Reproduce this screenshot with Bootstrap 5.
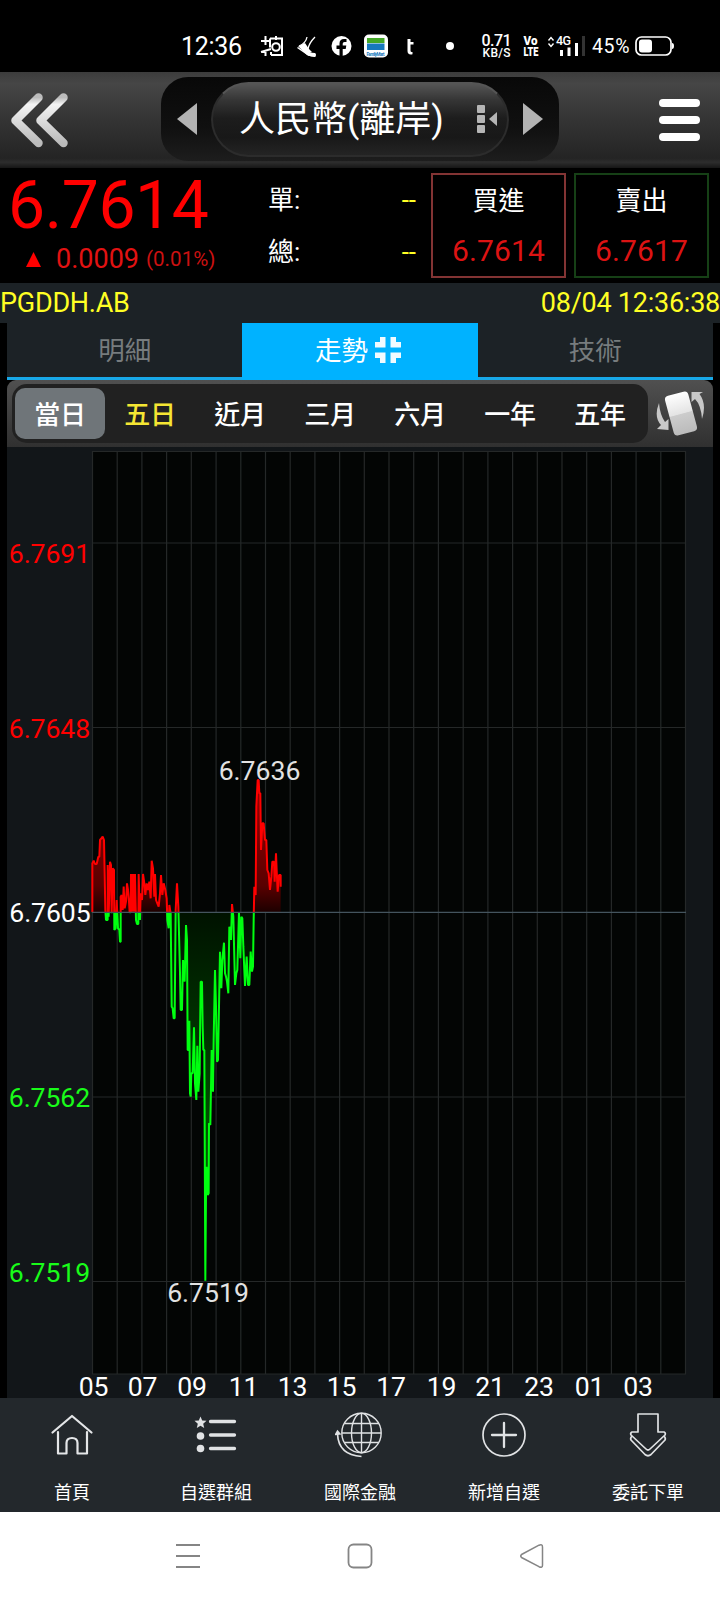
<!DOCTYPE html>
<html lang="zh-Hant">
<head>
<meta charset="utf-8">
<meta name="viewport" content="width=device-width, initial-scale=1">
<title>人民幣(離岸)</title>
<link href="https://cdn.jsdelivr.net/npm/bootstrap@5.3.0/dist/css/bootstrap.min.css" rel="stylesheet">
<style>
body{background:#000;color:#fff;font-family:Roboto,"Noto Sans CJK TC",sans-serif;width:720px;overflow-x:hidden}
svg{display:block;flex:none}
#plot{overflow:visible}
.statusbar{height:72px;padding-top:20px}
.titlebar{height:96px;background:linear-gradient(#3c3c3c 0,#464646 12%,#343434 50%,#242424 90%,#2d2d2d 94%,#161616 100%);padding:5px 19px 0 10px}
.pod{width:398px;height:84px;border-radius:27px;background:linear-gradient(#080808,#101010 60%,#1d1d1d);padding:0 16px;margin-right:9px}
.pill{width:298px;height:75px;border-radius:38px;background:linear-gradient(#555 0,#363636 22%,#1d1d1d 48%,#181818 75%,#242424 100%);border:2px solid #2c2c2c;border-top-color:#555;padding-left:26px;font-size:36px;line-height:72px}
.quote{height:115px;padding:5px 11px 0 8px}
.last{font-size:66px;line-height:66px;color:#f00;letter-spacing:-.4px}
.chg{font-size:27px;line-height:40px;color:#e21212}
.pct{font-size:20.6px;color:#c11;margin-left:7px}
.vol{width:148px;font-size:26px;line-height:52px;padding-top:1px}
.yl{color:#ffff24}
.side{width:135px;height:105px;border:2px solid #833434;font-size:26px;line-height:52px;text-align:center}
.side.sell{border-color:#164016;margin-left:8px}
.side .px{font-size:30px;line-height:48px;color:#dc1313;letter-spacing:.1px}
.codebar{height:40px;background:#1c2226;font-size:27px;line-height:40px}
.tabs{height:57px;margin:0 7px;background:#1c2226;font-size:26.5px;color:#777c7e}
.tabs>div{flex:1;border-bottom:3px solid #18a8e8;line-height:56px;height:57px}
.tabs>.on{background:#00b2ff;border-color:#00b2ff;color:#fff}
.range{height:67px;margin:0 7px;background:linear-gradient(#505050,#303030);border-radius:9px 9px 0 0;padding:4px 8px 0 5px}
.track{width:636px;height:59px;border-radius:15px;background:#212121;padding:4px 3px}
.track>div{width:90px;height:51px;line-height:54px;text-align:center;font-size:26px;font-weight:500;letter-spacing:-.2px}
.track>.on{background:#6f7579;border-radius:10px}
.chart{margin:0 7px;height:951px;background:#121619}
.botnav{height:114px;background:#23282c;font-size:18px}
.botnav>div{flex:1;padding-top:13px;line-height:24px}
.botnav svg{margin-bottom:20px}
.sysnav{height:88px;background:#fff}
</style>
</head>
<body>
<div class="statusbar">
<svg width="720" height="52" viewBox="0 20 720 52" fill="#fff" font-family="Roboto,sans-serif">
 <text x="181" y="55" font-size="25" textLength="61">12:36</text>
 <g stroke="#fff" stroke-width="2" fill="none"><path d="M261 41h10M265.500 36v9M265.500 50v6M261 52l10-3M270 38.500h12v16.500h-11M270 38.500v9M271 52v3M276 36v4"/><circle cx="276" cy="47" r="3.800"/></g>
 <path d="M298 46q4 0 7 4 4 3 10 3 2 1.500 0 4-4 0-8-2z"/><path d="M297.500 47.500l11 7.500 7 1" stroke="#fff" stroke-width="1.500" fill="none"/><path d="M299 46q7-3 8-9M308 49q1-6 7-12" stroke="#fff" stroke-width="1.300" fill="none"/><path d="M299 46l6-3 4 6 3 3-5 2z"/>
 <circle cx="341.500" cy="46" r="10"/><path d="M339.500 56v-7h-3v-3.500h3v-2q0-4.500 4.500-4.500h2.500v3h-2q-1.800 0-1.800 1.800v1.700h3.600l-.6 3.500h-3v7z" fill="#000"/>
 <rect x="364" y="34.500" width="24" height="23" rx="5"/><path d="M367 38h17.500v5h-17.500z" fill="#43a727"/><path d="M367 43.500h17.500v6.500h-17.500z" fill="#1678bd"/><text x="366.500" y="55.500" font-size="4.500" font-weight="700" fill="#1678bd" textLength="18">FamilyMart</text>
 <path d="M407.500 39h3v3h3v2.500h-3v6q0 2 2 1.500v2.300q-5 1-5-3.300z"/>
 <circle cx="450" cy="46" r="4"/>
 <text x="481.500" y="46" font-size="16" font-weight="500" textLength="30">0.71</text><text x="482.500" y="57" font-size="12" font-weight="500" textLength="28">KB/S</text>
 <text x="523.500" y="45" font-size="12" font-weight="900" textLength="14" lengthAdjust="spacingAndGlyphs">Vo</text><text x="523.500" y="56" font-size="12.500" font-weight="900" textLength="15" lengthAdjust="spacingAndGlyphs">LTE</text>
 <path d="M548.500 40.500l2.500-3 2.500 3M548.500 43.500l2.500 3 2.500-3" fill="none" stroke="#fff" stroke-width="1.400"/>
 <text x="556" y="45" font-size="12.500" font-weight="500" textLength="15">4G</text>
 <path d="M560 50h3v6h-3zM567.500 47.500h3v8.500h-3zM575 43h3v13h-3z"/><path d="M582 36h3v20h-3z" fill="#333"/>
 <text x="592" y="52.500" font-size="19.500" textLength="37.500">45%</text>
 <rect x="636" y="37" width="35" height="18" rx="5.500" fill="none" stroke="#fff" stroke-width="1.700"/><rect x="639" y="39.500" width="13" height="13" rx="3"/><path d="M672 43q2 0 2 3t-2 3z"/>
</svg>
</div>

<nav class="titlebar d-flex align-items-start">
 <svg width="60" height="60" viewBox="10 92 60 60" style="margin-top:15px"><defs><linearGradient id="sil" x1="0" y1="0" x2="0" y2="1"><stop offset="0" stop-color="#bbb"/><stop offset=".15" stop-color="#f4f4f4"/><stop offset=".5" stop-color="#ddd"/><stop offset="1" stop-color="#bbb"/></linearGradient></defs><path d="M38.500 97.500L15.500 120.500 38.500 143M63.500 97.500L40.500 120.500 63.500 143" fill="none" stroke="url(#sil)" stroke-width="8.500" stroke-linecap="round" stroke-linejoin="round"/></svg>
 <div class="pod d-flex align-items-center justify-content-between" style="margin-left:91px">
  <svg width="20" height="32"><path d="M0 16L20 0v32z" fill="#b3b3b3"/></svg>
  <div class="pill d-flex text-nowrap align-items-start"><span>人民幣(離岸)</span>
   <svg width="22" height="30" class="ms-auto" style="margin:20px 8px 0 0" fill="#b5b5b5"><rect y="1" width="8" height="8" rx="1"/><rect y="11" width="8" height="8" rx="1"/><rect y="21" width="8" height="8" rx="1"/><path d="M12 15l8-7v14z"/></svg></div>
  <svg width="20" height="32"><path d="M20 16L0 0v32z" fill="#b3b3b3"/></svg>
 </div>
 <svg class="ms-auto" width="42" height="43" style="margin-top:21px" fill="#fff"><rect y="1" width="41" height="8" rx="4"/><rect y="18" width="41" height="8" rx="4"/><rect y="35" width="41" height="8" rx="4"/></svg>
</nav>

<section class="quote d-flex">
 <div style="width:260px"><div class="last">6.7614</div>
  <div class="chg d-flex align-items-center"><svg width="15" height="15" style="margin:0 15px 0 18px"><path d="M7.500 0L15 15H0z" fill="#f00"/></svg>0.0009<span class="pct">(0.01%)</span></div></div>
 <div class="vol"><div class="d-flex justify-content-between"><span>單:</span><span class="yl">--</span></div><div class="d-flex justify-content-between"><span>總:</span><span class="yl">--</span></div></div>
 <div class="side ms-auto"><div>買進</div><div class="px">6.7614</div></div>
 <div class="side sell"><div>賣出</div><div class="px">6.7617</div></div>
</section>

<div class="codebar yl d-flex justify-content-between"><span style="letter-spacing:-.25px">PGDDH.AB</span><span style="letter-spacing:-.25px">08/04 12:36:38</span></div>

<div class="tabs d-flex text-center">
 <div>明細</div>
 <div class="on d-flex justify-content-center">走勢<svg width="26" height="26" fill="#fff" style="opacity:.94;margin:14px 0 0 7px"><path d="M5 0h5.500v10.500H0V5h5zM15.500 0H21v5h5v5.500H15.500zM0 15.500h10.500V26H5v-5H0zM15.500 15.500H26V21h-5v5h-5.500z"/></svg><span style="width:4px"></span></div>
 <div>技術</div>
</div>

<div class="range d-flex justify-content-between">
 <div class="track d-flex"><div class="on">當日</div><div style="color:#f5e633">五日</div><div>近月</div><div>三月</div><div>六月</div><div>一年</div><div>五年</div></div>
 <svg width="50" height="50" viewBox="655 389 50 50" style="margin-top:5px"><g fill="#c8c8c8"><path d="M659 403q-5.500 14 2 22l-4 4 11.500 1 0-11-3.500 3q-5-7-6-19z"/><path d="M702 419q5-15-2.500-25l3.500-2-11.500 0 0 10 3.500-3q6 6 7 20z"/></g><defs><linearGradient id="card" x1="0" y1="0" x2="0" y2="1"><stop offset="0" stop-color="#fff"/><stop offset=".5" stop-color="#e4e4e4"/><stop offset=".52" stop-color="#ccc"/><stop offset="1" stop-color="#bbb"/></linearGradient></defs><rect x="669" y="393" width="24" height="41" rx="4" transform="rotate(-15 681 413.500)" fill="url(#card)"/></svg>
</div>

<div class="chart">
<svg id="plot" width="706" height="951" viewBox="7 447 706 951" font-family="Roboto,sans-serif" font-size="26.600">
 <defs>
  <clipPath id="up"><rect x="0" y="0" width="700" height="517"/></clipPath>
  <clipPath id="down"><rect x="0" y="517" width="700" height="1200"/></clipPath>
  <linearGradient id="rf" gradientUnits="userSpaceOnUse" x1="0" y1="120" x2="0" y2="517"><stop offset="0" stop-color="#a00000"/><stop offset=".8" stop-color="#590000"/><stop offset="1" stop-color="#1c0000"/></linearGradient>
  <linearGradient id="gf" gradientUnits="userSpaceOnUse" x1="0" y1="517" x2="0" y2="1622"><stop offset="0" stop-color="#001200"/><stop offset=".35" stop-color="#003500"/><stop offset="1" stop-color="#008000"/></linearGradient>
 </defs>
 <rect x="92" y="451" width="594" height="923" fill="#030504"/>
 <g id="grid" stroke="#252828" stroke-width="1.200"></g>
 <g id="series" transform="translate(80 740) scale(.33333)"></g>
 <path d="M92 912.300H686" stroke="#44545e" stroke-width="1.300"/>
 <g text-anchor="end" letter-spacing="-.1">
  <text x="90" y="562.500" fill="#f00">6.7691</text><text x="90" y="737.500" fill="#f00">6.7648</text><text x="90.500" y="922" fill="#fff">6.7605</text><text x="90" y="1106.500" fill="#19fc19">6.7562</text><text x="90" y="1281.500" fill="#19fc19">6.7519</text></g>
 <g fill="#e2e2e2" text-anchor="middle"><text x="259.500" y="779.500">6.7636</text><text x="208" y="1302">6.7519</text></g>
 <g fill="#fff" text-anchor="middle" letter-spacing="-.3" id="hours"></g>
</svg>
</div>

<footer class="botnav d-flex text-center" id="menu">
 <div class="d-flex flex-column align-items-center"><svg width="50" height="50" viewBox="0 0 50 50" fill="none" stroke="#e4e6e8" stroke-width="2.200" stroke-linejoin="round" stroke-linecap="round"><path d="M5.500 21.500L25 5l19.500 16.500M11 21v21.500h8.500V32q0-5 5.500-5t5.500 5v10.500H40V21"/></svg>首頁</div>
 <div class="d-flex flex-column align-items-center"><svg width="50" height="50" viewBox="0 0 50 50" fill="#e0e2e4"><path d="M9.500 5.500l1.700 4 4.300.3-3.300 2.900 1 4.300-3.700-2.300-3.700 2.300 1-4.300-3.300-2.900 4.300-.3z"/><circle cx="9.500" cy="25" r="3.800"/><circle cx="9.500" cy="37.500" r="3.800"/><path d="M19.500 10.500h24M19.500 24h24M19.500 37.500h24" stroke="#e0e2e4" stroke-width="3.300" stroke-linecap="round"/></svg>自選群組</div>
 <div class="d-flex flex-column align-items-center"><svg width="50" height="50" viewBox="0 0 50 50" fill="none" stroke="#e0e2e4" stroke-width="1.400"><circle cx="26.500" cy="22" r="19.700"/><ellipse cx="26.500" cy="22" rx="10" ry="19.700"/><path d="M26.500 2v40M7 22h39M10 12.500h33M10 31.500h33"/><path d="M2.500 23q1 21 24 22.500" stroke-width="1.700"/><path d="M.5 23.500l2-3.500 2.500 3z" fill="#e0e2e4"/></svg>國際金融</div>
 <div class="d-flex flex-column align-items-center"><svg width="50" height="50" viewBox="0 0 50 50" fill="none" stroke="#e0e2e4" stroke-width="1.700"><circle cx="25" cy="24" r="21"/><path d="M25 12v24M13 24h24" stroke-width="2.300" stroke-linecap="round"/></svg>新增自選</div>
 <div class="d-flex flex-column align-items-center"><svg width="50" height="50" viewBox="0 0 50 50" fill="none" stroke="#e0e2e4" stroke-width="1.700" stroke-linejoin="round"><path d="M15 3h20v18h6q2 1 1 3L27 38q-2 2-4 0L8 24q-1-2 1-3h6z"/><path d="M9 25q-2 2-1 4l14 14.500q3 2.500 6 0L42 29q1-2-1-4"/></svg>委託下單</div>
</footer>
<div class="sysnav">
<svg width="720" height="88" viewBox="0 1512 720 88" fill="none" stroke="#858585" stroke-width="1.800" stroke-linejoin="round"><path d="M176 1545h24M176 1556h24M176 1567h24"/><rect x="348.500" y="1544.500" width="23" height="23" rx="5"/><path d="M521.500 1554.500L539 1545.200q3.500-1.500 3.500 2v18q0 3-3.500 1.500L521.500 1557.500q-1.500-1.500 0-3z" stroke-width="1.500"/></svg>
</div>

<script src="https://cdn.jsdelivr.net/npm/bootstrap@5.3.0/dist/js/bootstrap.bundle.min.js"></script>
<script>
let g='';
for(let i=0;i<=24;i++){const x=(92.5+i*24.71).toFixed(1);g+=`<path d="M${x} 451V1374"/>`}
[451.500,543,727.500,1097,1281.500,1374].forEach(y=>g+=`<path d="M92 ${y}H686"/>`);
document.getElementById('grid').innerHTML=g;
const hx=[93.500,142.500,192,243.500,292.500,341.500,391,441.500,490,539,589.500,638];
document.getElementById('hours').innerHTML=['05','07','09','11','13','15','17','19','21','23','01','03'].map((t,i)=>`<text x="${hx[i]}" y="1395.500">${t}</text>`).join('');
// intraday ticks: x, y pairs around the 6.7605 reference level at y = 517
const p='37,517 37,370 41,362 45,372 50,372 55,350 58,350 60,300 64,295 68,290 72,300 74,400 76,510 78,540 83,540 83,375 86,530 90,365 93,375 95,520 98,385 102,390 103,570 107,565 110,480 114,565 118,570 120,605 122,605 122,470 125,465 128,510 131,440 134,505 138,485 141,430 144,450 147,485 149,517 152,517 153,402 155,515 157,402 159,515 161,402 163,515 165,402 168,540 171,552 175,552 176,402 180,540 182,460 186,480 189,402 193,430 196,465 200,430 204,450 208,425 212,475 215,362 219,385 223,470 225,402 228,480 232,490 236,500 240,460 243,405 247,465 251,430 256,450 260,475 262,540 266,565 268,495 272,520 275,800 278,805 281,835 284,835 287,510 291,430 295,500 300,700 302,810 306,810 309,660 314,725 318,555 321,600 323,930 327,930 328,842 330,1060 332,1070 334,1000 338,1000 342,862 345,1030 349,1080 352,917 355,1055 359,1000 360,900 362,725 366,725 368,860 370,930 373,930 376,1622 378,1360 380,1280 383,1365 386,1360 387,1150 391,1155 395,930 399,1055 401,900 405,690 408,800 411,965 414,960 417,800 420,635 424,745 427,660 432,608 435,700 438,710 441,725 445,760 448,560 453,600 456,492 460,530 465,735 469,700 472,690 477,517 481,655 484,530 487,535 490,620 495,738 500,650 504,735 508,735 512,635 516,695 519,680 521,540 523,440 527,465 529,200 533,120 536,120 538,160 541,160 543,330 547,250 551,250 555,300 559,300 562,390 566,400 570,450 574,410 577,365 582,365 584,425 588,340 590,390 593,455 597,405 602,405 602,440';
document.getElementById('series').innerHTML=[['up','rf','#ff0000'],['down','gf','#00ff10']].map(([c,f,s])=>`<g clip-path="url(#${c})"><polygon points="${p} 602,517" fill="url(#${f})"/><polyline points="${p}" fill="none" stroke="${s}" stroke-width="6" stroke-linejoin="bevel"/></g>`).join('');
</script>
</body>
</html>
